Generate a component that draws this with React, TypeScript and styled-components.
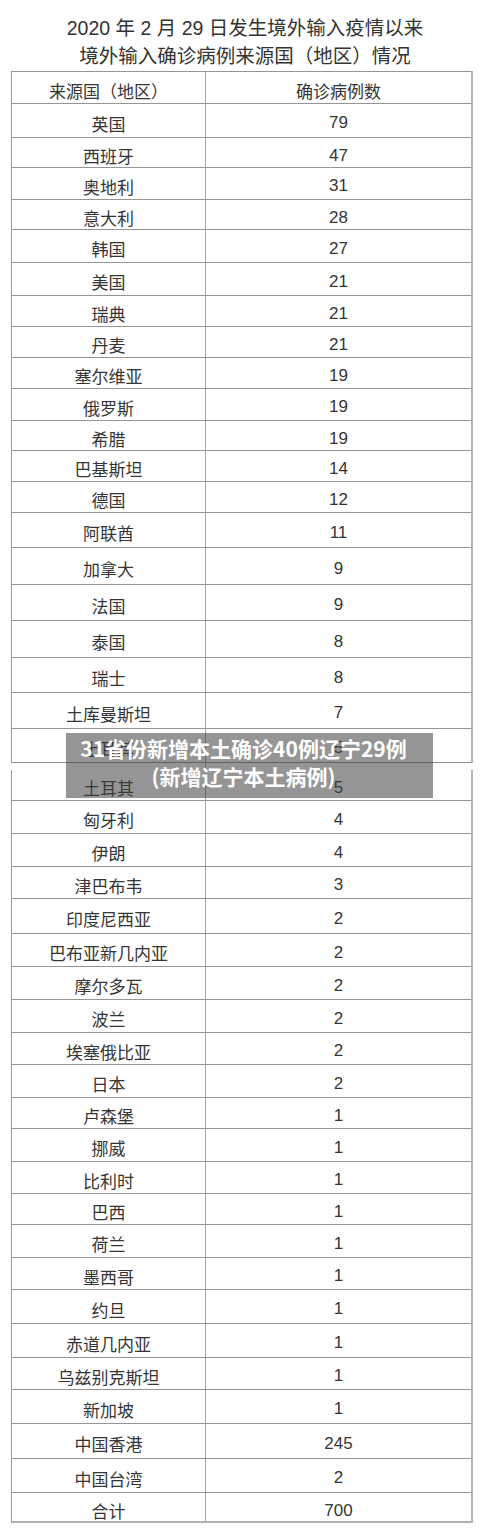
import React from 'react';
import styled, { createGlobalStyle } from 'styled-components';

const GlobalStyle = createGlobalStyle`
  * { box-sizing: border-box; }
  body {
    margin: 0;
    background: #fff;
    font-family: "Liberation Sans", "Noto Sans CJK SC", sans-serif;
    color: #333;
  }
`;

const Page = styled.div`
  position: relative;
  width: 500px;
  height: 1532px;
  padding-top: 14px;
  background: #fff;
`;

const Title = styled.h1`
  margin: 0;
  padding-right: 10px;
  text-align: center;
  font-size: 19.5px;
  font-weight: 400;
  line-height: 28px;
  color: #333;
`;

const TableWrap = styled.div`
  margin: 1px 0 0 11px;
  width: 462px;
`;

const Segment = styled.div<{ $bottom?: 'thin' | 'thick' }>`
  border-left: 1px solid #9c9c9c;
  border-right: 2px solid #b4b4b4;
  border-bottom: ${p =>
    p.$bottom === 'thick' ? '2px solid #b0b0b0' : p.$bottom === 'thin' ? '1px solid #8e8e8e' : 'none'};
`;

const Row = styled.div<{ $h: number; $line: boolean }>`
  display: grid;
  grid-template-columns: 194px 1fr;
  height: ${p => p.$h}px;
  border-top: ${p => (p.$line ? '1px solid #959595' : 'none')};
`;

const Cell = styled.div<{ $first?: boolean }>`
  display: flex;
  justify-content: center;
  align-items: center;
  padding-top: 5px;
  font-size: 17px;
  color: #353535;
  white-space: nowrap;
  border-right: ${p => (p.$first ? '1px solid #a4a4a4' : 'none')};
`;

const Gap = styled.div`
  display: grid;
  grid-template-columns: 194px 1fr;
  height: 7px;
  padding: 0 2px 0 1px;
`;

const GapCell = styled.div`
  border-right: 1px solid #a4a4a4;
`;

const Banner = styled.div`
  position: absolute;
  left: 66px;
  top: 733px;
  width: 367px;
  height: 65px;
  padding: 1px 12px 0 0;
  background: rgba(62, 62, 62, 0.55);
  color: #fff;
  text-align: center;
  font-family: "Noto Sans CJK SC", sans-serif;
  font-weight: 700;
  font-size: 21px;
  line-height: 28px;
`;

type Item = [string, string, number];

// heights measured from the line positions of the scan
const partOne: Item[] = [
  ['来源国（地区）', '确诊病例数', 32],
  ['英国', '79', 34],
  ['西班牙', '47', 30],
  ['奥地利', '31', 32],
  ['意大利', '28', 30],
  ['韩国', '27', 33],
  ['美国', '21', 33],
  ['瑞典', '21', 31],
  ['丹麦', '21', 31],
  ['塞尔维亚', '19', 31],
  ['俄罗斯', '19', 32],
  ['希腊', '19', 30],
  ['巴基斯坦', '14', 31],
  ['德国', '12', 31],
  ['阿联酋', '11', 35],
  ['加拿大', '9', 37],
  ['法国', '9', 36],
  ['泰国', '8', 37],
  ['瑞士', '8', 35],
  ['土库曼斯坦', '7', 36],
  ['土耳其', '5', 34],
];

const partTwo: Item[] = [
  ['土耳其', '5', 30],
  ['匈牙利', '4', 33],
  ['伊朗', '4', 33],
  ['津巴布韦', '3', 32],
  ['印度尼西亚', '2', 35],
  ['巴布亚新几内亚', '2', 33],
  ['摩尔多瓦', '2', 33],
  ['波兰', '2', 33],
  ['埃塞俄比亚', '2', 32],
  ['日本', '2', 33],
  ['卢森堡', '1', 31],
  ['挪威', '1', 33],
  ['比利时', '1', 32],
  ['巴西', '1', 31],
  ['荷兰', '1', 33],
  ['墨西哥', '1', 32],
  ['约旦', '1', 34],
  ['赤道几内亚', '1', 34],
  ['乌兹别克斯坦', '1', 32],
  ['新加坡', '1', 34],
  ['中国香港', '245', 35],
  ['中国台湾', '2', 34],
  ['合计', '700', 29],
];

function Rows({ items, topLine }: { items: Item[]; topLine: boolean }) {
  return (
    <>
      {items.map(([name, count, h], i) => (
        <Row key={i} $h={h} $line={topLine || i > 0}>
          <Cell $first>{name}</Cell>
          <Cell>{count}</Cell>
        </Row>
      ))}
    </>
  );
}

export default function App() {
  return (
    <>
      <GlobalStyle />
      <Page>
        <Title>
          2020 年 2 月 29 日发生境外输入疫情以来
          <br />
          境外输入确诊病例来源国（地区）情况
        </Title>
        <TableWrap>
          <Segment $bottom="thin">
            <Rows items={partOne} topLine />
          </Segment>
          <Gap>
            <GapCell />
            <div />
          </Gap>
          <Segment $bottom="thick">
            <Rows items={partTwo} topLine={false} />
          </Segment>
        </TableWrap>
        <Banner>
          31省份新增本土确诊40例辽宁29例
          <br />
          (新增辽宁本土病例)
        </Banner>
      </Page>
    </>
  );
}
